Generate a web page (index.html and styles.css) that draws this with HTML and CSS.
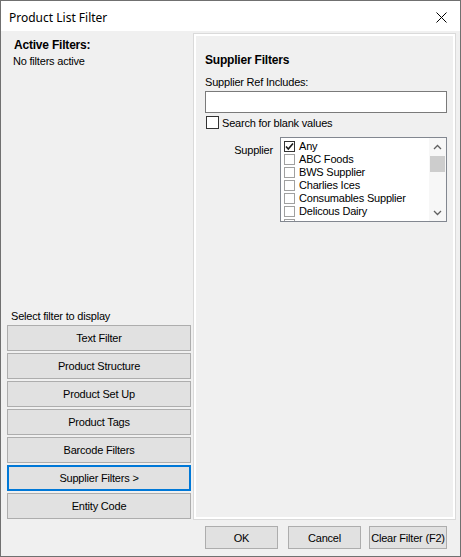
FILE: index.html
```html
<!DOCTYPE html>
<html>
<head>
<meta charset="utf-8">
<link rel="stylesheet" href="styles.css">
</head>
<body>
<div class="window">
  <div class="titlebar">
    <span class="title">Product List Filter</span>
    <svg class="close" width="11" height="11" viewBox="0 0 11 11"><path d="M0.5 0.5L10.5 10.5M10.5 0.5L0.5 10.5" stroke="#000" stroke-width="1" fill="none"/></svg>
  </div>
  <div class="body">
    <div class="left">
      <div class="active-title">Active Filters:</div>
      <div class="active-none">No filters active</div>
      <div class="select-block">
        <div class="select-label">Select filter to display</div>
        <div class="filter-buttons">
          <div class="btn">Text Filter</div>
          <div class="btn">Product Structure</div>
          <div class="btn">Product Set Up</div>
          <div class="btn">Product Tags</div>
          <div class="btn">Barcode Filters</div>
          <div class="btn selected">Supplier Filters &gt;</div>
          <div class="btn">Entity Code</div>
        </div>
      </div>
    </div>
    <div class="right">
      <div class="panel">
        <div class="panel-inner">
          <div class="panel-title">Supplier Filters</div>
          <div class="field-label">Supplier Ref Includes:</div>
          <div class="textbox"></div>
          <div class="check-row">
            <span class="checkbox"></span>
            <span>Search for blank values</span>
          </div>
          <div class="supplier-row">
            <div class="supplier-label">Supplier</div>
            <div class="listbox">
              <div class="items">
                <div class="item"><span class="lcheck checked"><svg width="9" height="9" viewBox="0 0 9 9"><path d="M1 4.5L3.3 7L8 1.5" stroke="#1a1a1a" stroke-width="1.6" fill="none"/></svg></span>Any</div>
                <div class="item"><span class="lcheck"></span>ABC Foods</div>
                <div class="item"><span class="lcheck"></span>BWS Supplier</div>
                <div class="item"><span class="lcheck"></span>Charlies Ices</div>
                <div class="item"><span class="lcheck"></span>Consumables Supplier</div>
                <div class="item"><span class="lcheck"></span>Delicous Dairy</div>
                <div class="item"><span class="lcheck"></span></div>
              </div>
              <div class="scrollbar">
                <div class="arrow"><svg width="9" height="6" viewBox="0 0 9 6"><path d="M1 5L4.5 1.5L8 5" stroke="#606060" stroke-width="1.3" fill="none"/></svg></div>
                <div class="thumb"></div>
                <div class="track"></div>
                <div class="arrow"><svg width="9" height="6" viewBox="0 0 9 6"><path d="M1 1L4.5 4.5L8 1" stroke="#606060" stroke-width="1.3" fill="none"/></svg></div>
              </div>
            </div>
          </div>
        </div>
      </div>
      <div class="footer">
        <div class="fbtn ok">OK</div>
        <div class="fbtn cancel">Cancel</div>
        <div class="fbtn clear">Clear Filter (F2)</div>
      </div>
    </div>
  </div>
</div>
</body>
</html>
```

FILE: styles.css
```css
html, body {
  margin: 0;
  padding: 0;
  background: #ffffff;
}
body {
  font-family: "Liberation Sans", Arial, sans-serif;
  font-size: 11px;
  letter-spacing: -0.2px;
  color: #000;
}
.window {
  width: 461px;
  height: 557px;
  box-sizing: border-box;
  border: 1px solid #707070;
  display: flex;
  flex-direction: column;
  background: #fff;
}
.titlebar {
  height: 30px;
  box-sizing: border-box;
  flex: none;
  display: flex;
  align-items: center;
  justify-content: space-between;
  padding: 2px 13px 0 8px;
  background: #fff;
}
.title {
  font-family: "Noto Sans", "Open Sans", sans-serif;
  font-size: 12px;
  letter-spacing: 0;
  color: #000;
}
.close {
  display: block;
}
.body {
  flex: 1;
  display: flex;
  background: #f0f0f0;
  min-height: 0;
}
.left {
  width: 192px;
  flex: none;
  box-sizing: border-box;
  display: flex;
  flex-direction: column;
  padding: 0 2px 37px 6px;
}
.active-title {
  font-weight: bold;
  font-size: 12px;
  line-height: 14px;
  margin: 7px 0 0 7px;
}
.active-none {
  line-height: 13px;
  margin: 3px 0 0 6px;
}
.select-block {
  margin-top: auto;
}
.select-label {
  line-height: 13px;
  margin: 0 0 2px 4px;
}
.filter-buttons {
  display: flex;
  flex-direction: column;
  gap: 2px;
}
.btn {
  height: 26px;
  box-sizing: border-box;
  border: 1px solid #adadad;
  background: #e1e1e1;
  display: flex;
  align-items: center;
  justify-content: center;
  white-space: nowrap;
}
.btn.selected {
  border: 2px solid #0078d7;
}
.right {
  flex: 1;
  display: flex;
  flex-direction: column;
  padding: 2px 4px 0 0;
  min-width: 0;
}
.panel {
  height: 487px;
  box-sizing: border-box;
  border: 1px solid #dadada;
  box-shadow: inset 0 0 0 2px #fff;
}
.panel-inner {
  padding: 19px 8px 0 11px;
  display: flex;
  flex-direction: column;
}
.panel-title {
  font-weight: bold;
  font-size: 12px;
  line-height: 14px;
}
.field-label {
  line-height: 13px;
  margin-top: 9px;
}
.textbox {
  margin-top: 2px;
  height: 22px;
  box-sizing: border-box;
  border: 1px solid #7a7a7a;
  background: #fff;
}
.check-row {
  margin-top: 3px;
  height: 13px;
  display: flex;
  align-items: center;
  gap: 3px;
  padding-left: 1px;
}
.checkbox {
  width: 13px;
  height: 13px;
  box-sizing: border-box;
  border: 1px solid #333;
  background: #fff;
}
.supplier-row {
  margin-top: 8px;
  display: flex;
}
.supplier-label {
  width: 75px;
  box-sizing: border-box;
  padding: 7px 7px 0 0;
  text-align: right;
  line-height: 13px;
}
.listbox {
  flex: 1;
  height: 85px;
  box-sizing: border-box;
  border: 1px solid #828790;
  background: #fff;
  display: flex;
  overflow: hidden;
}
.items {
  flex: 1;
  padding-top: 2px;
  overflow: hidden;
}
.item {
  height: 13px;
  line-height: 13px;
  display: flex;
  align-items: center;
  padding-left: 3px;
  gap: 4px;
  white-space: nowrap;
}
.lcheck {
  width: 11px;
  height: 11px;
  box-sizing: border-box;
  border: 1px solid #a0a0a0;
  background: #fff;
  display: flex;
  align-items: center;
  justify-content: center;
  flex: none;
}
.lcheck.checked {
  border-color: #333;
}
.lcheck svg {
  display: block;
}
.scrollbar {
  width: 17px;
  flex: none;
  display: flex;
  flex-direction: column;
  background: #f7f7f7;
}
.arrow {
  height: 17px;
  display: flex;
  align-items: center;
  justify-content: center;
}
.thumb {
  margin: 1px 1px 0 1px;
  height: 16px;
  background: #cdcdcd;
}
.track {
  flex: 1;
}
.footer {
  display: flex;
  padding-left: 12px;
  margin-top: 6px;
}
.fbtn {
  height: 23px;
  box-sizing: border-box;
  border: 1px solid #adadad;
  background: #e1e1e1;
  display: flex;
  align-items: center;
  justify-content: center;
  white-space: nowrap;
}
.fbtn.ok {
  width: 73px;
}
.fbtn.cancel {
  width: 73px;
  margin-left: 10px;
}
.fbtn.clear {
  width: 78px;
  margin-left: 8px;
}
```
